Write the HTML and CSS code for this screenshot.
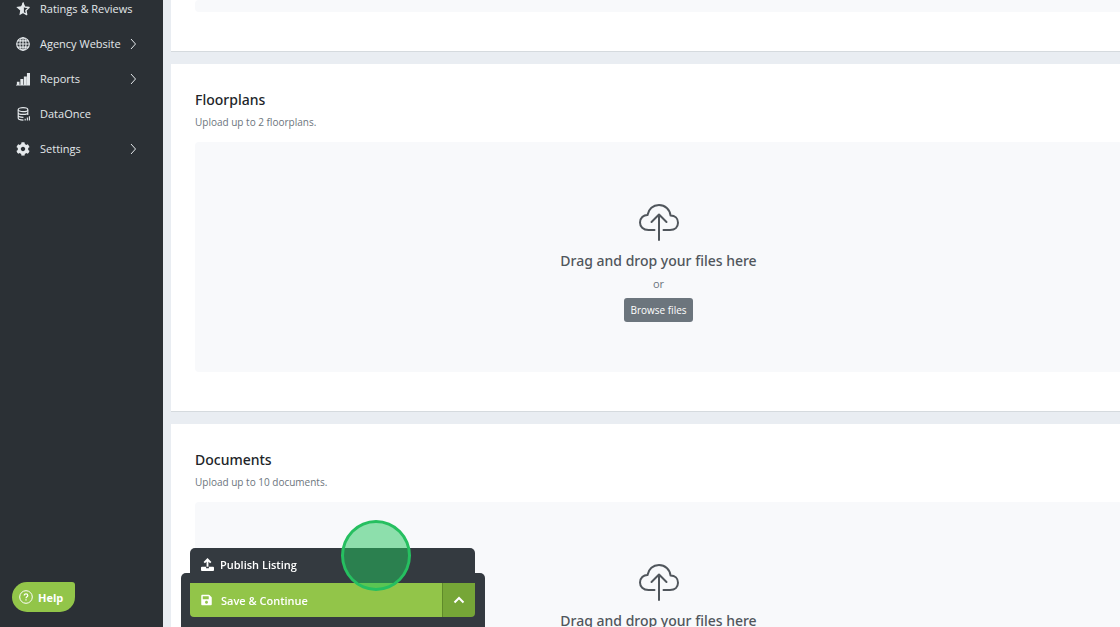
FILE: index.html
```
<!DOCTYPE html>
<html lang="en">
<head>
	<meta charset="UTF-8">
	<title>Edit Listing</title>
	<link rel="stylesheet" href="styles.css">
</head>
<body>
	<div class="layout">
		<aside class="sidebar">
			<nav class="menu">
				<a href="#">
					<svg class="icon" viewBox="0 0 16 16"><path d="M8 1.500l2 4.200 4.900.6-3.600 3.400.9 4.700L8 12z" fill="none" stroke="currentColor" stroke-width="1.600" stroke-linejoin="round"/><path d="M8.800.3v12l-4.900 2.900.9-5.500L.3 5.700l5.500-.8L8.200.3z" fill="currentColor"/></svg>
					<span>Ratings &amp; Reviews</span>
				</a>
				<a href="#">
					<svg class="icon" viewBox="0 0 16 16" fill="none" stroke="currentColor" stroke-width="1.300"><circle cx="8" cy="8" r="7.200"/><ellipse cx="8" cy="8" rx="3.500" ry="7.200"/><path d="M8 .7v14.600M.7 8h14.600M2 4.500h12M2 11.500h12"/></svg>
					<span>Agency Website</span>
					<svg class="arrow" viewBox="0 0 8 12"><path d="M2 1l4.500 5L2 11"/></svg>
				</a>
				<a href="#">
					<svg class="icon" viewBox="0 0 16 16" fill="currentColor"><path d="M1 11h3v4H1zM5 8h3.300v7H5zM9 5h3.300v10H9zM12.500 1H16v14h-3.500zM0 14.500h16v1H0z"/></svg>
					<span>Reports</span>
					<svg class="arrow" viewBox="0 0 8 12"><path d="M2 1l4.500 5L2 11"/></svg>
				</a>
				<a href="#">
					<svg class="icon" viewBox="0 0 16 16" fill="none" stroke="currentColor" stroke-width="1.300"><ellipse cx="8" cy="3" rx="5.500" ry="2.300"/><path d="M2.500 3v9.700c0 1.300 2.500 2.300 6 2.300M13.500 3v6M2.500 6.200c0 1.300 2.500 2.300 5.500 2.300s5.500-1 5.500-2.300M2.500 9.500c0 1.300 2.500 2.300 6 2.300M10.500 15.500v-2M13 15.500v-3.500M15.300 15.500v-5"/></svg>
					<span>DataOnce</span>
				</a>
				<a href="#">
					<svg class="icon" viewBox="0 0 512 512" fill="currentColor"><path d="M487.400 315.700l-42.600-24.600c4.300-23.200 4.300-47 0-70.200l42.600-24.600c4.900-2.800 7.100-8.600 5.500-14-11.100-35.600-30-67.800-54.700-94.600-3.800-4.100-10-5.100-14.800-2.300L380.800 110c-17.900-15.400-38.500-27.300-60.800-35.100V25.800c0-5.600-3.900-10.500-9.400-11.700-36.700-8.200-74.300-7.800-109.200 0-5.500 1.200-9.400 6.100-9.400 11.700V75c-22.200 7.900-42.800 19.800-60.800 35.100L88.700 85.500c-4.900-2.800-11-1.900-14.800 2.300-24.700 26.700-43.600 58.900-54.700 94.600-1.700 5.400.6 11.200 5.500 14L67.300 221c-4.300 23.200-4.300 47 0 70.200l-42.600 24.600c-4.900 2.800-7.100 8.600-5.500 14 11.100 35.600 30 67.800 54.700 94.600 3.800 4.100 10 5.100 14.800 2.300l42.600-24.600c17.900 15.400 38.500 27.300 60.800 35.100v49.200c0 5.600 3.900 10.500 9.400 11.700 36.700 8.200 74.300 7.800 109.200 0 5.500-1.200 9.400-6.100 9.400-11.700v-49.200c22.200-7.900 42.800-19.800 60.800-35.100l42.600 24.600c4.900 2.800 11 1.900 14.800-2.300 24.700-26.700 43.600-58.900 54.700-94.600 1.500-5.500-.7-11.300-5.600-14.100zM256 336c-44.100 0-80-35.900-80-80s35.900-80 80-80 80 35.900 80 80-35.900 80-80 80z"/></svg>
					<span>Settings</span>
					<svg class="arrow" viewBox="0 0 8 12"><path d="M2 1l4.500 5L2 11"/></svg>
				</a>
			</nav>
		</aside>

		<main class="content">
			<section class="card card-scrolled">
				<div class="dropzone"></div>
			</section>

			<section class="card">
				<h2>Floorplans</h2>
				<p class="hint">Upload up to 2 floorplans.</p>
				<div class="dropzone">
					<svg class="cloud" viewBox="0 0 40 38"><path d="M15.500 27H9.500C4 27 1 23.500 1 19.500 1 15 4.500 12 8.500 12 9.500 6 14 2 20 2s11 4.500 11.500 10.500C36 12.500 39 15.500 39 19.800 39 24 36 27 31 27h-6.500M20 37V11.500M12.500 19l7.500-7.500 7.500 7.500"/></svg>
					<p class="drag">Drag and drop your files here</p>
					<p class="or">or</p>
					<button class="browse">Browse files</button>
				</div>
			</section>

			<section class="card">
				<h2>Documents</h2>
				<p class="hint">Upload up to 10 documents.</p>
				<div class="dropzone">
					<svg class="cloud" viewBox="0 0 40 38"><path d="M15.500 27H9.500C4 27 1 23.500 1 19.500 1 15 4.500 12 8.500 12 9.500 6 14 2 20 2s11 4.500 11.500 10.500C36 12.500 39 15.500 39 19.800 39 24 36 27 31 27h-6.500M20 37V11.500M12.500 19l7.500-7.500 7.500 7.500"/></svg>
					<p class="drag">Drag and drop your files here</p>
					<p class="or">or</p>
					<button class="browse">Browse files</button>
				</div>
			</section>
		</main>
	</div>

	<!-- save bar with its open menu -->
	<div class="actions">
		<button class="publish">
			<svg viewBox="0 0 14 14"><path d="M7 9.500V2M3.500 5L7 1.500 10.500 5" fill="none" stroke="currentColor" stroke-width="2"/><path d="M1 9.500h4.500v1.500h3V9.500H13a1 1 0 0 1 1 1V13a1 1 0 0 1-1 1H1a1 1 0 0 1-1-1v-2.500a1 1 0 0 1 1-1z" fill="currentColor"/></svg>
			Publish Listing
		</button>
		<div class="save-bar">
			<div class="save-group">
				<button class="save">
					<svg viewBox="0 0 448 512" fill="currentColor"><path d="M433.900 129.900l-83.800-83.800A48 48 0 0 0 316.100 32H48C21.500 32 0 53.500 0 80v352c0 26.500 21.500 48 48 48h352c26.500 0 48-21.500 48-48V163.900a48 48 0 0 0-14.100-34zM224 416c-35.300 0-64-28.700-64-64s28.700-64 64-64 64 28.700 64 64-28.700 64-64 64zm96-304.500V212c0 6.600-5.400 12-12 12H76c-6.600 0-12-5.400-12-12V108c0-6.600 5.400-12 12-12h228.500c3.200 0 6.200 1.300 8.500 3.500l3.500 3.500a12 12 0 0 1 3.500 8.500z"/></svg>
					Save &amp; Continue
				</button>
				<button class="toggle" aria-label="More actions">
					<svg viewBox="0 0 12 8"><path d="M1.500 6.500L6 2l4.500 4.500"/></svg>
				</button>
			</div>
		</div>
	</div>

	<button class="help">
		<svg viewBox="0 0 14 14" fill="none" stroke="currentColor"><circle cx="7" cy="7" r="6.300"/><path d="M5.200 5.600c0-2.400 3.600-2.300 3.600-.1 0 1.300-1.800 1.300-1.800 2.700M7 9.300v1.200" stroke-width="1.200"/></svg>
		Help
	</button>

	<div class="click-marker"></div>
</body>
</html>
```
FILE: styles.css
```
* {
	box-sizing: border-box;
}

body {
	margin: 0;
	height: 100vh;
	overflow: hidden;
	background: #e9edf2;
	color: #212529;
	font-family: "Segoe UI", "Open Sans", "Noto Sans", sans-serif;
	font-size: 11px;
}

h2, p {
	margin: 0;
}

button {
	border: 0;
	padding: 0;
	font-family: inherit;
	cursor: pointer;
}

.layout {
	display: flex;
	height: 100%;
}

/* sidebar */
.sidebar {
	flex: 0 0 163px;
	background: #2b3035;
	overflow: hidden;
}

.menu {
	margin-top: -9px;
}

.menu a {
	display: flex;
	align-items: center;
	height: 35px;
	padding: 0 26px 0 16px;
	color: #e4e8eb;
	text-decoration: none;
	white-space: nowrap;
}

.icon {
	width: 14px;
	height: 14px;
	margin-right: 10px;
}

.arrow {
	width: 8px;
	height: 12px;
	margin-left: auto;
	fill: none;
	stroke: currentColor;
}

/* cards */
.content {
	flex: 1;
	min-width: 0;
	padding-left: 8px;
	overflow: hidden;
}

.card {
	margin-bottom: 12px;
	padding: 24px 0 39px 24px;
	background: #fff;
	border-bottom: 1px solid #d5dade;
}

.card h2,
.drag {
	font-family: "Segoe UI", "Noto Sans", sans-serif;
	font-size: 14px;
	line-height: 24px;
	font-weight: 500;
}

.hint {
	margin-bottom: 10px;
	color: #6c757d;
	font-size: 10px;
	line-height: 20px;
}

.dropzone {
	display: flex;
	flex-direction: column;
	align-items: center;
	justify-content: center;
	height: 230px;
	margin-right: -2px;
	padding-top: 10px;
	background: #f8f9fb;
	border-radius: 4px;
}

.card-scrolled {
	padding-top: 0;
}

.card-scrolled .dropzone {
	height: 12px;
}

.cloud {
	width: 40px;
	height: 38px;
	fill: none;
	stroke: #50565c;
	stroke-width: 2;
	stroke-linecap: round;
	stroke-linejoin: round;
}

.drag {
	margin-top: 8px;
	color: #50565c;
}

.or {
	margin: 1px 0 4px;
	color: #6c757d;
	line-height: 20px;
}

.browse {
	height: 24px;
	padding: 0 6px;
	background: #6c757d;
	border-radius: 3px;
	color: #fff;
	font-size: 10px;
}

/* save bar */
.actions {
	position: fixed;
	left: 181px;
	bottom: 0;
	width: 304px;
	color: #fff;
}

.actions button {
	display: flex;
	align-items: center;
	color: #fff;
	font-size: 11px;
	font-weight: 600;
}

.actions .publish {
	width: 285px;
	height: 25px;
	margin-left: 9px;
	padding: 8px 0 0 11px;
	gap: 6px;
	background: #343a40;
	border-radius: 5px 5px 0 0;
}

.publish svg {
	width: 13px;
	height: 13px;
}

.save-bar {
	padding: 10px 10px 10px 9px;
	background: #343a40;
	border-radius: 5px 5px 0 0;
}

.save-group {
	display: flex;
	height: 34px;
	border-radius: 0 0 4px 4px;
	overflow: hidden;
}

.actions .save {
	flex: 1;
	padding-left: 11px;
	gap: 9px;
	background: #92c549;
}

.save svg {
	width: 11px;
	height: 12px;
}

.actions .toggle {
	width: 33px;
	justify-content: center;
	background: #76a637;
	border-left: 1px solid #5f8a2a;
}

.toggle svg {
	width: 12px;
	height: 8px;
	fill: none;
	stroke: currentColor;
	stroke-width: 2;
}

.help {
	position: fixed;
	left: 12px;
	bottom: 15px;
	display: flex;
	align-items: center;
	gap: 5px;
	width: 63px;
	height: 30px;
	padding-left: 7px;
	background: #92c549;
	border-radius: 15px 3px 15px 15px;
	color: #fff;
	font-size: 11px;
	font-weight: 700;
}

.help svg {
	width: 14px;
	height: 14px;
}

.click-marker {
	position: fixed;
	left: 341px;
	bottom: 36px;
	width: 70px;
	height: 71px;
	background: rgba(34, 197, 94, 0.5);
	border: 3px solid #26bf60;
	border-radius: 50%;
}
```
